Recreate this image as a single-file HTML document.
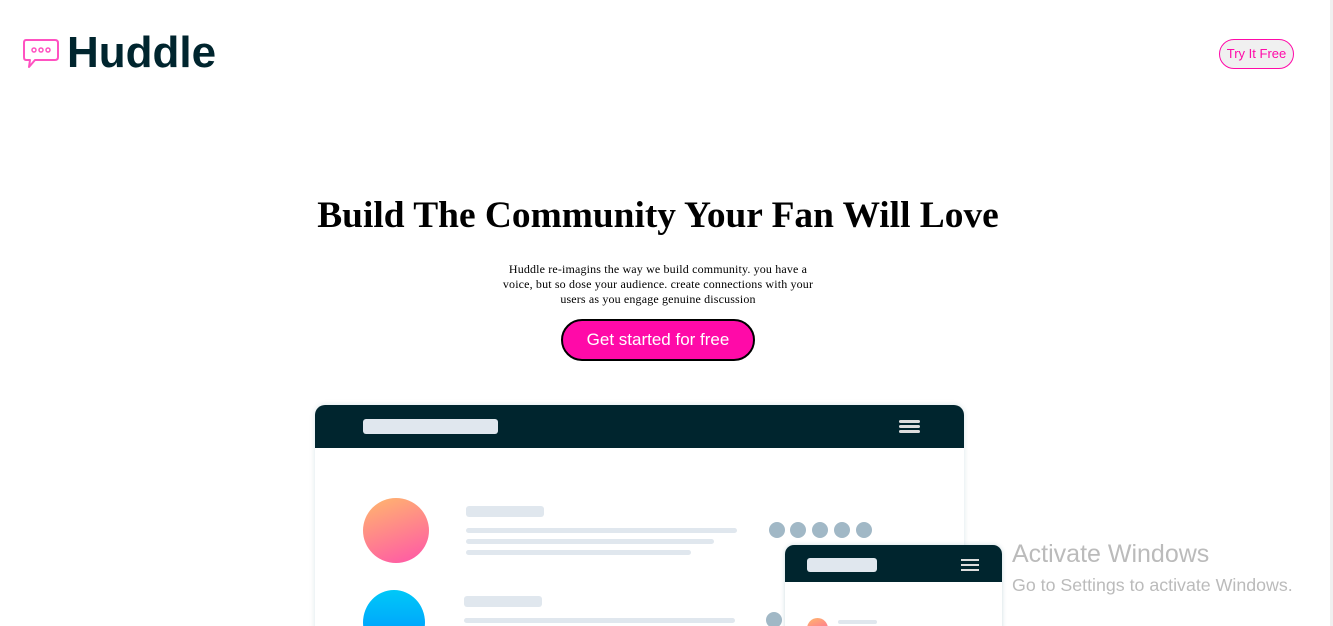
<!DOCTYPE html>
<html><head><style>
*{margin:0;padding:0;box-sizing:border-box}
html,body{width:1333px;height:626px;overflow:hidden}
body{background:#fff;position:relative;font-family:"Liberation Serif",serif}
.a{position:absolute}
.bar{position:absolute;background:#e0e7ee;border-radius:3px}
.dot{position:absolute;width:16px;height:16px;border-radius:50%;background:#a1b8c6}
</style></head><body>
<svg class="a" style="left:22px;top:38px" width="38" height="32" viewBox="0 0 38 32"><path d="M4 2 H33 Q36 2 36 5 V19 Q36 22 33 22 H13 L7 29 L8 22 H4 Q2 22 2 19 V5 Q2 2 4 2Z" fill="none" stroke="#ff52c1" stroke-width="2" stroke-linejoin="round"/><circle cx="12" cy="12" r="2" fill="none" stroke="#ff52c1" stroke-width="1.5"/><circle cx="19" cy="12" r="2" fill="none" stroke="#ff52c1" stroke-width="1.5"/><circle cx="26" cy="12" r="2" fill="none" stroke="#ff52c1" stroke-width="1.5"/></svg>
<div class="a" style="left:67px;top:28px;font-family:'Liberation Sans',sans-serif;font-weight:bold;font-size:44px;color:#00252e;letter-spacing:0px">Huddle</div>
<div class="a" style="left:1219px;top:39px;width:75px;height:30px;border:1.5px solid #ff0aa8;border-radius:15px;background:#f0f0f0;color:#ff0aa8;font-family:'Liberation Sans',sans-serif;font-size:13px;line-height:27px;text-align:center">Try It Free</div>
<div class="a" style="left:1330px;top:0;width:3px;height:626px;background:#f0f0f0"></div>
<div class="a" style="left:0;width:1316px;top:194px;text-align:center;font-weight:bold;font-size:37.4px;color:#000">Build The Community Your Fan Will Love</div>
<div class="a" style="left:493px;width:330px;top:262px;text-align:center;font-size:12px;line-height:15px;color:#000;letter-spacing:0.15px">Huddle re-imagins the way we build community. you have a voice, but so dose your audience. create connections with your users as you engage genuine discussion</div>
<div class="a" style="left:561px;top:319px;width:194px;height:42px;border:2px solid #000;border-radius:21px;background:#ff0aa8;color:#fff;font-family:'Liberation Sans',sans-serif;font-size:17px;line-height:38px;text-align:center">Get started for free</div>
<div class="a" style="left:315px;top:405px;width:649px;height:240px;border-radius:10px;background:#fff;box-shadow:0 0 6px rgba(0,80,100,0.15);overflow:hidden">
 <div class="a" style="left:0;top:0;width:649px;height:43px;background:#00252e"></div>
 <div class="bar" style="left:48px;top:14px;width:135px;height:15px;border-radius:3px"></div>
 <div class="a" style="left:584px;top:15px;width:21px;height:3px;background:#ddd;border-radius:2px;box-shadow:0 5px 0 #ddd,0 10px 0 #ddd"></div>
</div>
<div class="a" style="left:363px;top:498px;width:66px;height:65px;border-radius:50%;background:linear-gradient(160deg,#ffb86c,#ff54a9)"></div>
<div class="bar" style="left:466px;top:506px;width:78px;height:11px"></div>
<div class="bar" style="left:466px;top:528px;width:271px;height:5px"></div>
<div class="bar" style="left:466px;top:539px;width:248px;height:5px"></div>
<div class="bar" style="left:466px;top:550px;width:225px;height:5px"></div>
<div class="dot" style="left:769px;top:522px"></div><div class="dot" style="left:790px;top:522px"></div><div class="dot" style="left:812px;top:522px"></div><div class="dot" style="left:834px;top:522px"></div><div class="dot" style="left:856px;top:522px"></div>
<div class="a" style="left:363px;top:590px;width:62px;height:65px;border-radius:50%;background:linear-gradient(180deg,#00c8f8,#0090ff)"></div>
<div class="bar" style="left:464px;top:596px;width:78px;height:11px"></div>
<div class="bar" style="left:464px;top:618px;width:271px;height:5px"></div>
<div class="dot" style="left:766px;top:612px"></div>
<div class="a" style="left:785px;top:545px;width:217px;height:100px;border-radius:9px;background:#fff;box-shadow:0 0 5px rgba(0,80,100,0.2);overflow:hidden">
 <div class="a" style="left:0;top:0;width:217px;height:37px;background:#00252e"></div>
 <div class="bar" style="left:22px;top:13px;width:70px;height:14px"></div>
 <div class="a" style="left:176px;top:14px;width:18px;height:2px;background:#ddd;box-shadow:0 5px 0 #ddd,0 10px 0 #ddd"></div>
 <div class="a" style="left:22px;top:73px;width:21px;height:21px;border-radius:50%;background:linear-gradient(160deg,#ffb86c,#ff54a9)"></div>
 <div class="bar" style="left:53px;top:75px;width:39px;height:4px"></div>
</div>
<div class="a" style="left:1012px;top:540px;font-family:'Liberation Sans',sans-serif;font-size:25px;color:#bbb">Activate Windows</div>
<div class="a" style="left:1012px;top:575px;font-family:'Liberation Sans',sans-serif;font-size:17.8px;color:#bbb">Go to Settings to activate Windows.</div>
</body></html>
